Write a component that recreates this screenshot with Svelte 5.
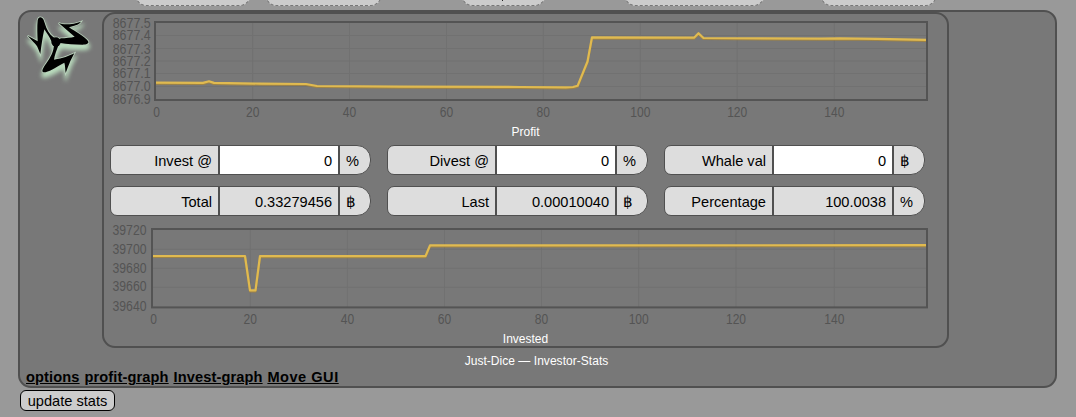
<script>
  const tabs = [
    { gap: 135, width: 116 },
    { gap: 14, width: 117 },
    { gap: 79, width: 85, mark: true },
    { gap: 78, width: 141 },
    { gap: 55, width: 117 }
  ];

  const profit = {
    frame: { x: 155, y: 22, w: 772, h: 78 },
    yLabels: [['8677.5', 28], ['8677.4', 40.3], ['8677.3', 54], ['8677.2', 66], ['8677.1', 78], ['8677.0', 91], ['8676.9', 104]],
    rows: [35.5, 48.5, 61, 73.5, 86.5],
    cols: [252.7, 349.5, 446.5, 543.3, 640.3, 737.2, 834.3],
    x0: 156.5,
    line: '156,82.6 203,82.9 209,81.3 214,82.9 260,83.6 306,84 317,86 400,86.6 520,87 566,87.3 573,87 577.6,85.8 587.5,61.5 592,37.3 694,37.7 698.5,33.2 703.5,38 820,38.7 840,38.3 877,38.8 926,39.9'
  };

  const invested = {
    frame: { x: 152, y: 229, w: 775, h: 78.4 },
    yLabels: [['39720', 235], ['39700', 254], ['39680', 273], ['39660', 291], ['39640', 311]],
    rows: [249.3, 268.3, 287.3],
    cols: [250.3, 347.4, 444.5, 541.5, 638.7, 736, 834.3],
    x0: 153.5,
    line: '153,256 245,256 250,290.4 255.5,290.4 260,256 425.5,256.2 430,245.4 926,245.2'
  };

  const rows = [
    [['Invest @', '0', '%'], ['Divest @', '0', '%'], ['Whale val', '0', '฿']],
    [['Total', '0.33279456', '฿'], ['Last', '0.00010040', '฿'], ['Percentage', '100.0038', '%']]
  ];
  const links = ['options', 'profit-graph', 'Invest-graph', 'Move GUI'];
</script>

{#snippet plot(c, box, right, labelW, baseline)}
  <svg class="plot" viewBox={box}>
    {#each c.cols as x}
      <line class="grid" x1={x} x2={x} y1={c.frame.y} y2={c.frame.y + c.frame.h} />
    {/each}
    {#each c.rows as y}
      <line class="grid" x1={c.frame.x} x2={c.frame.x + c.frame.w} y1={y} y2={y} />
    {/each}
    <polyline class="shade" points={c.line} transform="translate(0 1)" />
    <polyline class="line" points={c.line} />
    <rect class="frame" x={c.frame.x} y={c.frame.y} width={c.frame.w} height={c.frame.h} />
    {#each c.yLabels as [t, y]}
      <text x={right - labelW} {y} textLength={labelW} lengthAdjust="spacingAndGlyphs">{t}</text>
    {/each}
    {#each [c.x0, ...c.cols] as x, i}
      {@const t = String(i * 20)}
      {@const w = t.length * 6.7}
      <text x={x - w / 2} y={baseline} textLength={w} lengthAdjust="spacingAndGlyphs">{t}</text>
    {/each}
  </svg>
{/snippet}

<div class="page">
  <div class="tabs">
    {#each tabs as t}
      <div class="tab" style="width:{t.width}px;margin-left:{t.gap}px">
        {#if t.mark}<i></i>{/if}
      </div>
    {/each}
  </div>

  <main class="panel">
    <div class="body">
      <svg class="logo" viewBox="0 0 246 255">
        <defs>
          <g id="blades">
            <path d="M122 101 C110 94 101 84 94 68 L86 45 C81 34 70 34 68 46 C66 66 67 86 68 109 L38 92 C48 104 62 116 67 125 L76 147 C79 122 83 95 88 73 C95 84 103 95 109 108 L120 120 Z" />
            <path d="M126 106 L138 100 C151 99 168 98 179 95 L131 54 C146 61 176 58 198 50 C190 61 176 62 162 67 C181 80 209 94 219 108 C224 116 213 119 203 119 C179 119 156 117 136 114 Z" />
            <path d="M117 116 C117 141 106 157 93 176 C84 189 78 199 86 202 C100 202 121 188 148 173 C151 181 150 192 152 204 C157 190 162 179 166 168 L178 145 C163 152 143 161 117 164 C119 149 124 137 131 119 Z" />
            <circle cx="123" cy="111" r="14" />
          </g>
        </defs>
        <use class="glow" href="#blades" x="1" y="13" />
        <use class="halo" href="#blades" />
        <use href="#blades" />
      </svg>

      <section class="stats">
        {@render plot(profit, '104 14 843 107', 150.7, 38, 117)}
        <div class="caption first">Profit</div>
        <div class="fields">
          {#each rows as row, r}
            {#each row as [label, value, unit]}
              <div class="field">
                <span class="label">{label}</span>
                <span class="value" class:editable={r === 0}>{value}</span>
                <span class="unit">{unit}</span>
              </div>
            {/each}
          {/each}
        </div>
        {@render plot(invested, '104 222 843 107', 146.5, 34, 324.3)}
        <div class="caption">Invested</div>
      </section>
    </div>
    <div class="title">Just-Dice — Investor-Stats</div>
    <nav>
      {#each links as l}<a href="#top">{l}</a>{/each}
    </nav>
  </main>
  <button>update stats</button>
</div>

<style>
  :global(body) {
    margin: 0;
    background: #999;
  }
  .page {
    width: 1076px;
    height: 417px;
    overflow: hidden;
    background: #999;
    font: 14.6px 'Liberation Sans', Arial, sans-serif;
    color: #000;
  }
  .tabs {
    display: flex;
    align-items: flex-end;
    height: 6px;
    overflow: hidden;
    margin-bottom: 4px;
  }
  .tab {
    box-sizing: border-box;
    flex: none;
    height: 26px;
    border: 1px dashed #777;
    border-radius: 12px;
    background: #ccc;
  }
  .tab i {
    display: block;
    width: 1px;
    height: 1px;
    margin: 19px 0 0 40px;
    background: #222;
  }
  .panel {
    box-sizing: border-box;
    width: 1039px;
    height: 378px;
    margin-left: 18px;
    border: 2px solid #505050;
    border-radius: 13px;
    background: #787878;
  }
  .body {
    display: flex;
  }
  .logo {
    width: 82px;
    height: 85px;
    margin: -7px 0 0 -5px;
    flex: none;
    padding-right: 5px;
    overflow: visible;
  }
  .glow {
    fill: #b9dcbd;
    stroke: #b9dcbd;
    stroke-width: 8;
    filter: blur(6px);
  }
  .halo {
    fill: none;
    stroke: #b9d0bb;
    stroke-width: 5;
    filter: blur(1px);
  }
  .stats {
    box-sizing: border-box;
    width: 847px;
    height: 336px;
    border: 2px solid #505050;
    border-radius: 13px;
  }
  .plot {
    display: block;
    width: 843px;
    height: 107px;
  }
  .plot text {
    font: 14px 'Liberation Sans', Arial, sans-serif;
    fill: #545454;
  }
  .grid {
    stroke: #717171;
    stroke-width: 1;
  }
  .frame {
    fill: none;
    stroke: #545454;
    stroke-width: 2;
  }
  .line,
  .shade {
    fill: none;
    stroke-width: 2.2;
    stroke-linejoin: round;
  }
  .line {
    stroke: #e0ba50;
  }
  .shade {
    stroke: #a8863a;
    opacity: 0.8;
  }
  .caption,
  .title {
    color: #fff;
    font-size: 12px;
    line-height: 14px;
    text-align: center;
  }
  .caption {
    padding-top: 3px;
  }
  .first {
    padding: 4px 0 6px;
  }
  .fields {
    display: grid;
    grid-template-columns: repeat(3, 261px);
    gap: 11px 16px;
    padding: 0 0 6px 6px;
  }
  .field {
    display: flex;
    box-sizing: border-box;
    height: 30px;
    border: 1px solid #505050;
    border-radius: 7px 14px 14px 7px;
    background: #ddd;
    overflow: hidden;
    line-height: 31px;
  }
  .label,
  .value {
    box-sizing: border-box;
    text-align: right;
    padding-right: 6px;
    border-right: 2px solid #505050;
  }
  .label {
    width: 109px;
  }
  .value {
    width: 120px;
  }
  .editable {
    background: #fff;
  }
  .unit {
    padding-left: 6px;
  }
  .title {
    margin: 6px 2px 0 0;
    letter-spacing: 0.04px;
  }
  nav {
    display: flex;
    gap: 4.8px;
    padding: 1px 0 0 6px;
    line-height: 17px;
    font-weight: bold;
    letter-spacing: 0.13px;
  }
  nav a {
    color: #000;
  }
  nav a:last-child {
    letter-spacing: 0.5px;
  }
  button {
    display: block;
    box-sizing: border-box;
    width: 95px;
    height: 21px;
    margin: 2px 0 0 20px;
    padding: 0;
    border: 1px solid #000;
    border-radius: 6px;
    background: #ccc;
    font: inherit;
    line-height: 20px;
    color: #000;
  }
</style>
